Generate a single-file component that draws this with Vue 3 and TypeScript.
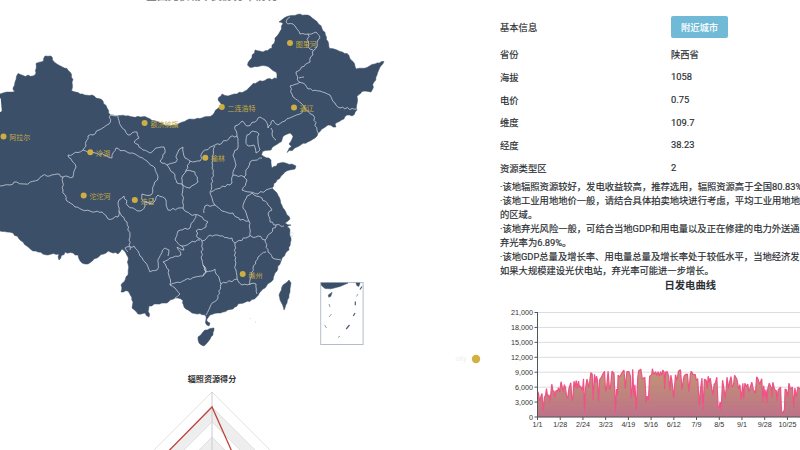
<script setup lang="ts">
type Point = [number, number]

interface City { name: string; x: number; y: number }
interface Row { label: string; value: string }

const parse = (s: string): Point[] =>
  s.trim().split(/\s+/).map((p) => p.split(',').map(Number) as Point)

// Adds small irregular steps to a line so that borders do not look straight.
function trace(s: string, amp = 0.8, close = false): string {
  const pts = parse(s)
  if (close) pts.push(pts[0])
  const out: string[] = [`M${pts[0][0]} ${pts[0][1]}`]
  for (let i = 1; i < pts.length; i++) {
    const [ax, ay] = pts[i - 1]
    const [bx, by] = pts[i]
    const len = Math.hypot(bx - ax, by - ay)
    const n = Math.max(1, Math.round(len / 2.6))
    for (let k = 1; k <= n; k++) {
      const t = k / n
      const seed = Math.sin(i * 12.9898 + k * 78.233 + pts.length) * 43758.5453
      const j = k === n || len === 0 ? 0 : (seed - Math.floor(seed) - 0.5) * 2 * amp
      const x = ax + (bx - ax) * t - ((by - ay) / (len || 1)) * j
      const y = ay + (by - ay) * t + ((bx - ax) / (len || 1)) * j
      out.push(`L${x.toFixed(1)} ${y.toFixed(1)}`)
    }
  }
  return out.join('') + (close ? 'Z' : '')
}

const mainland = trace(`-6,96 0,94 7,92 15,91.5 13,88 15,82 18,73.5 23,75.5 33,76 36,73 36,63.5 43.5,61 45,56 51,56
  52.5,60 59.5,65.5 67,68.5 70,72 73,79.5 71.5,90.5 80,94 92,95 103,101 107,108 110.5,115 118,115.5 133,117 145,116.5
  152,120.5 160,123 170,126 177,125 187,120 200,118.5 210,116.5 218,108.5 222,105 218,100 222,94 228,96 237,94 247,90 253,83.5
  267,79 277,78.5 276,72 268,66.5 260,66 250,67.5 247.5,65 250,60 255,50 263,52 272,48 275,38 281.5,29 283,23.5 279,22
  287,16.5 300,14 310,16 317,21.5 322,28.5 326.5,37 329.5,48.5 340,51.5 347,53.5 353,61.5 356,69 367,67.5 375,64 384,61.5
  377,75 371,92 362,91.5 357,96.5 357,110 352,116 347,115 341.5,120 335,124 336,127 328,125 318,133 315,138 310,141
  297,147 287,152.5 291.5,146.5 289,144 293,136.5 290,133 283,136.5 281.5,141.5 275,145.5 271,150 262.5,151.5 261.5,155
  271,160 272,168 280,163 287,163.5 296,166 295,169 285,172 277,180 272,188 277,193 283,208 290,219 285,223 291,225
  287,227 290,230 291,238 289,250 281.5,260 275,273 271.5,281.5 265,288 256.5,297 250,301.5 238,304 233,309 223,312
  210,315 206.5,320 210,323 209,326 205.5,323 206,316 200,313.5 192,313 184,307 183,300.5 175,298 167,303 157,304
  149,306 149,317 145,313 138,314 132,308 133,302 128,291 121,292 121,285 128,275 128,257 122,249 118,254 108,251
  97,258 88,264 82,263 78,255 65,252 59,260 59,254 48,255 33,251 23,242 13,233 7,232 0,231 -6,231`, 0.9, true)

const islands: string[] = [
  trace('198,337 205,330 214,328 213,335 207,343 204,346 199,343', 0.5, true),
  trace('289,280 291,283 290,292 287,303 284,310 281,302 279,295 283,285', 0.5, true),
]

const borders: string[] = [
  '110.5,115 109,124 99,130 93,135 88,136 86,146 83,150 73,154 68,155 72,161 76,167 73,177 63,177',
  '-2,185 10,185 14,182 25,184 38,180 42,176 57,174 63,177',
  '63,177 63,190 66,200 75,207 90,211 102,212 108,219 118,217 119,211 127,222 130,235 130,250',
  '119,211 119,200 124,196 128,206 140,211 145,206 146,201 150,204 153,198',
  '83,150 90,152 95,153 104,155 112,158 116,148 127,152 135,154 147,161 155,168 158,177 154,185 151,195 142,194 143,201 152,204 158,195',
  '110.5,115 118,115.5 121,126 128,135 137,132 139,138 134,142 143,150 150,153 156,148 164,147 165,153 160,161 167,165 176,162 178,152 183,147 185,158 190,161 186,170 183,175 182,184 177,183 175,175 167,165',
  '158,195 166,200 168,210 183,208 182,184 190,188 198,182 195,172 186,171',
  '190,161 200,161 202,153 205,150 213,146 222,143 230,137 237,136',
  '183,208 190,214 200,216 208,222 206,227 196,231 198,238 202,241',
  '196,215 190,228 178,231 175,240 182,246 190,243 200,240',
  '182,246 184,250 177,247 181,255 170,258 163,262 169,270 170,285 175,288 180,294 175,298',
  '128,252 125,248 134,246 140,256 145,262 150,272 157,270 159,258 165,248 169,250 168,256',
  '170,285 185,280 195,277 203,276 206,272 202,260 202,241',
  '215,146 212,163 213,173 210,192 215,205',
  '237,136 238,147 233,155 236,165 233,175 232,183 211,192',
  '237,136 235,126 242,121 247,126 255,122 260,117 265,120 268,128 273,120 278,125 285,121 292,117 300,114 303,110',
  '271,128 272,134 276,140',
  '247,135 253,131 259,134 258,143 260,150 256,153 254,145 248,146 246,140 247,135',
  '262,158 250,162 248,168 244,177 247,180 242,190 250,192 258,194 266,190 272,188',
  '233,175 244,177',
  '204,213 205,206 215,205 222,211 233,213 240,220 249,221',
  '252,193 247,196 243,208 247,216 249,221 250,236',
  '252,193 262,198 268,205 272,210 268,214 270,222 276,225 284,226',
  '276,225 271,233 265,240',
  '202,241 210,235 220,236 232,238 235,243 248,237 258,236 265,240',
  '235,243 235,260 236,270 237,278',
  '265,240 268,252 275,259 281,260',
  '266,252 258,257 253,268 250,280 250,285',
  '237,278 242,285 250,284 256,284 257,294',
  '203,276 206,272 203,265 206,272 215,269 221,284 237,279',
  '221,284 218,298 210,307 206,315',
  '290,17 286,22 295,26 300,34 308,34 316,32 320,38 314,50 310,62 296,72 299,82 303,83',
  '308,34 308,47 313,50',
  '299,78 304,77',
  '303,83 308,89 320,91 330,95 335,103 340,108 357,109',
  '300,82 290,86 293,97 302,104 308,111 313,115 318,133',
].map((s) => trace(s, 1.1))

const cities: City[] = [
  { name: '图里河', x: 290, y: 43 },
  { name: '二连浩特', x: 221.8, y: 107 },
  { name: '通辽', x: 294, y: 107.4 },
  { name: '额济纳旗', x: 144.6, y: 123 },
  { name: '阿拉尔', x: 3.5, y: 136.5 },
  { name: '冷湖', x: 90.3, y: 152.3 },
  { name: '榆林', x: 205.3, y: 157.7 },
  { name: '沱沱河', x: 83.7, y: 195.6 },
  { name: '达日', x: 134.8, y: 200 },
  { name: '赣州', x: 242.7, y: 274 },
]

const rows: Row[] = [
  { label: '省份', value: '陕西省' },
  { label: '海拔', value: '1058' },
  { label: '电价', value: '0.75' },
  { label: '维度', value: '109.7' },
  { label: '经度', value: '38.23' },
  { label: '资源类型区', value: '2' },
]

const notes: string[] = [
  '·该地辐照资源较好，发电收益较高，推荐选用，辐照资源高于全国80.83%',
  '·该地工业用地地价一般，请结合具体拍卖地块进行考虑，平均工业用地地',
  '的区域。',
  '·该地弃光风险一般，可结合当地GDP和用电量以及正在修建的电力外送通',
  '弃光率为6.89%。',
  '·该地GDP总量及增长率、用电量总量及增长率处于较低水平，当地经济发',
  '如果大规模建设光伏电站，弃光率可能进一步增长。',
]

// Daily chart, drawn in a 300 x 150 box.
const ticksY = [21000, 18000, 15000, 12000, 9000, 6000, 3000, 0]
const ticksX = ['1/1', '1/28', '2/24', '3/23', '4/19', '5/16', '6/12', '7/9', '8/5', '9/1', '9/28', '10/25']
const x0 = 37.5
const y0 = 117
const yOf = (v: number) => y0 - (v / 21000) * 104.5
const fmt = (v: number) => v.toLocaleString('en-US')

const spring = parse(`0.3,5100 1,4700 2,3200 3.5,4200 4.5,4700 5.7,1200 7,4000 8,4300 9,5700 10,4200 11.5,4400 12.5,3100
  14.3,6600 15.5,5100 16.5,5200 17.3,4000 18.5,5300 20,5200 21,5900 22.3,5000 23.5,7100 25,5800 25.8,5100 26.8,6500
  28,5900 29,4200 30.2,3700 31.5,5800 33.3,6900 34.5,3200 35.5,4000 36.5,7200 37.7,6000 38.7,7300 39.7,5700 41,7200
  42,5900 43,6200 45,5300 46,7700 47,1100 48,5800 49.5,7600 51.3,5900 52.2,7100 53.4,8900 54.7,8600 55.5,3400
  57,8600 58,6900 59,8200 60,7300 61,3200 62.2,7500 64,8000 65,8500 67,9200 68,5200 69,5600 70.6,9200 72,5500
  73,5900 74.5,9200 76.5,8800 78,1000 79,5600 80,4400 80.6,8400 82,8000`)
const later = parse(`92,8200 94,8900 96,9400 97.3,5700 99,9100 101,9100 102.5,8200 103,3800 104.3,6000 104.8,9600 106,4100 107,6500
  108.5,1400 110,8000 111,9300 113,9600 114.5,7600 117,8000 118.4,3000 119.2,4200 120.7,3400 122,8200 124,8500
  124.7,9700 126,8500 128,9100 129,8300 130.5,9100 131.5,8200 133,9100 134,8300 135.2,9400 136.5,9000 137,5600
  138,9000 139.6,9100 141,8200 142.5,5300 143.3,8400 144.3,7400 146.2,3800 148,8500 149.5,7300 151,9200 153,9500
  154.7,5500 156.3,7900 157,8300 158,8500 160,8600 161.5,5100 163,8600 164,9200 166,8500 168,8500 169,7300
  170.4,7700 172,2400 173.5,6000 174.8,7800 175.7,1300 177.3,7600 179,7400 180,5700 181,8200 182,6900 183,7800
  184.5,5800 186,4400 187,6600 188.3,6800 189.7,8000 191,2000 192,1700 193,3000 194,1400 195.5,7400 197,5600
  198,3700 199.3,5800 200,8000 201.5,5700 202.6,7000 204,8100 205.3,6000 206.5,6400 207.7,8400 210,7600 211.7,5600
  213,6500 214.3,3500 216,6800 216.8,3800 218,6800 219.5,6100 221,6600 222,5000 223.5,6000 225,7000 226.5,5500
  228.6,4800 230,8100 231.4,7600 233,6500 235,7700 236.3,3100 237,6300 238.3,4000 239.3,5500 240.2,2800 241.2,5700
  242.7,6800 244.7,5800 245.3,4000 246.2,7000 248,5500 249.8,5200 250.3,3300 251.8,5500 254,6000 255,1200 256.5,800
  258,1500 258.6,5600 260,5400 261.5,4000 262.5,6800 264,5600 266,6000 267.4,1900 268.5,5800 270,4000 271.5,6000 274,5600 276,4400 278,6400`)
  .map(([x, v]): Point => [x - 9.5 - (x - 92) * 0.0091, v])
const series = [...spring, ...later]
const lineD = 'M' + series.map(([x, v]) => `${(x0 + x).toFixed(1)} ${yOf(v).toFixed(1)}`).join('L')
const areaD = `${lineD}L${x0 + 267} ${y0}L${x0} ${y0}Z`
</script>

<template>
  <main class="page">
    <section class="left">
      <h2 class="map-title">全国光伏城市资源分布情况</h2>
      <svg class="map" viewBox="0 0 440 365" width="440" height="365">
        <g class="land">
          <path :d="mainland" />
          <path v-for="(d, i) in islands" :key="i" :d="d" />
        </g>
        <g class="borders">
          <path v-for="(d, i) in borders" :key="i" :d="d" />
        </g>
        <path class="gap" d="M-1 96L0.8 99 1.8 111 -1 113Z" />
        <g class="islets">
          <path d="M291.5 232l2 2M290 236l3 0M250 318l1 1M255 322l1 0" />
        </g>
        <g class="inset">
          <rect x="320.7" y="282.5" width="42.4" height="62" />
          <path class="solid" d="M321 283H348L340 286.5 331 288.8 325 288.5 321.5 285.5ZM356 283h4l-1.2 3.5-2-1Z" />
          <path class="solid" d="M328.3 295l3.8-2.7-1.3 4-2 1Z" />
          <path d="M329 304l1 3M331.5 314l-2.5 3M324.7 325l1.8 3M340 336l-2 1.5M358 294l-1.5 2.5" class="faint" />
          <path class="dash" d="M355.3 301.5v3.8M355 313l-1.7 3M349.5 325l-3.3 4M362 286.5l-2 3" />
        </g>
        <g v-for="c in cities" :key="c.name" class="city">
          <circle :cx="c.x" :cy="c.y" r="3" />
          <text :x="c.x + 5.8" :y="c.y + 3.5">{{ c.name }}</text>
        </g>
      </svg>
      <svg class="radar" viewBox="0 0 440 85" width="440" height="85">
        <text class="radar-title" x="212" y="16.5" text-anchor="middle">辐照资源得分</text>
        <path class="ring" d="M212 27L312 127H112Z" />
        <path class="ring shade" d="M212 42L297 127H127Z" />
        <path class="ring" d="M212 57L282 127H142Z" />
        <path class="ring shade" d="M212 72L267 127H157Z" />
        <path class="axis" d="M212 27V85" />
        <path class="score" d="M165.7 89L212 42L233 89" />
      </svg>
    </section>

    <aside class="legend">
      <span class="legend-text">city</span>
      <svg class="legend-dot" viewBox="0 0 10 10" width="10" height="10">
        <circle cx="5" cy="5" r="4.2" />
      </svg>
    </aside>

    <section class="right">
      <div class="row head">
        <span class="label">基本信息</span>
        <button class="near" type="button">附近城市</button>
      </div>
      <div v-for="r in rows" :key="r.label" class="row">
        <span class="label">{{ r.label }}</span>
        <span>{{ r.value }}</span>
      </div>
      <div class="notes">
        <p v-for="(n, i) in notes" :key="i">{{ n }}</p>
      </div>
      <h3 class="chart-title">日发电曲线</h3>
      <svg class="chart" viewBox="0 0 300 150" width="300" height="150">
        <defs>
          <linearGradient id="fill" gradientUnits="userSpaceOnUse" x1="0" y1="68" x2="0" y2="117">
            <stop offset="0" stop-color="#bd9068" />
            <stop offset="1" stop-color="#b96780" />
          </linearGradient>
        </defs>
        <path v-for="v in ticksY" :key="v" class="grid" :d="`M37 ${yOf(v)}H300`" />
        <path :d="areaD" fill="url(#fill)" fill-opacity="0.93" />
        <path class="curve" :d="lineD" />
        <path class="base" :d="`M37.5 12V${y0}H300`" />
        <g v-for="v in ticksY" :key="'y' + v">
          <path class="base" :d="`M34.5 ${yOf(v)}H37.5`" />
          <text class="tick" x="33" :y="yOf(v) + 2.6" text-anchor="end">{{ fmt(v) }}</text>
        </g>
        <g v-for="(t, i) in ticksX" :key="t">
          <path class="base" :d="`M${x0 + i * 22.72} ${y0}v3`" />
          <text class="tick" :x="x0 + i * 22.72" :y="y0 + 10.3" text-anchor="middle">{{ t }}</text>
        </g>
      </svg>
    </section>
  </main>
</template>

<style>
body {
  margin: 0;
  background: #fff;
}
</style>

<style scoped>
.page {
  display: flex;
  width: 800px;
  height: 450px;
  overflow: hidden;
  background: #fff;
  color: #2b2f33;
  font-family: Roboto, "Noto Sans CJK SC", sans-serif;
  font-size: 9.3px;
  -webkit-text-stroke: 0.18px currentColor;
}
.left {
  flex: 0 0 440px;
  height: 450px;
  overflow: hidden;
  display: grid;
  grid-template: 365px 85px / 440px;
}
.map-title {
  grid-area: 1 / 1;
  margin: -11px 0 0;
  padding-left: 146px;
  height: 15px;
  line-height: 15px;
  font-size: 10.9px;
  font-weight: 700;
  color: #888;
  -webkit-text-stroke: 0;
}
.map {
  grid-area: 1 / 1;
}
.radar {
  grid-area: 2 / 1;
}
.land path {
  fill: #3b4f69;
  stroke: #3b4f69;
  stroke-width: 0.5;
}
.borders path {
  fill: none;
  stroke: #c0c8d3;
  stroke-width: 0.85;
  stroke-linejoin: round;
}
.gap {
  fill: #fff;
}
.islets path {
  fill: none;
  stroke: #a9b3c0;
  stroke-width: 0.5;
}
.inset rect {
  fill: none;
  stroke: #b3bdca;
  stroke-width: 1;
}
.inset .solid {
  fill: #3b4f69;
  stroke: #3b4f69;
  stroke-width: 0.5;
}
.inset .dash {
  fill: none;
  stroke: #4c5d76;
  stroke-width: 1.2;
}
.inset .faint {
  fill: none;
  stroke: #8d99aa;
  stroke-width: 0.9;
}
.city circle {
  fill: #ccaf42;
}
.city text {
  fill: #c6aa3f;
  font-size: 7px;
  -webkit-text-stroke: 0.2px #c6aa3f;
}
.radar-title {
  font-size: 8.1px;
  font-weight: 700;
  fill: #333;
  -webkit-text-stroke: 0;
}
.ring {
  fill: #fff;
  stroke: #dedede;
  stroke-width: 0.9;
}
.shade {
  fill: #eee;
}
.axis {
  stroke: #ccc;
  stroke-width: 1;
}
.score {
  fill: none;
  stroke: #c0443c;
  stroke-width: 1.3;
}
.legend {
  flex: 0 0 60px;
  display: flex;
  align-items: center;
  gap: 5px;
  box-sizing: border-box;
  height: 10px;
  margin-top: 354px;
  padding-left: 15.5px;
}
.legend-text {
  width: 10px;
  font-size: 7px;
  line-height: 10px;
  color: #f4f4f4;
}
.legend-dot {
  display: block;
  fill: #d1b140;
}
.right {
  flex: 0 0 300px;
  overflow: hidden;
  padding-top: 11px;
}
.row {
  display: flex;
  align-items: center;
  height: 22.7px;
}
.row span {
  margin-top: -1.4px;
}
.head {
  height: 32.5px;
}
.label {
  flex: 0 0 171px;
}
.near {
  width: 57px;
  height: 22px;
  padding: 0;
  border: 0;
  border-radius: 2px;
  background: #70bad8;
  color: #fff;
  font: inherit;
}
.notes {
  height: 98px;
}
.notes p {
  margin: 0;
  height: 14px;
  line-height: 14px;
  white-space: nowrap;
}
.chart-title {
  margin: 0;
  padding-left: 164.5px;
  height: 23px;
  line-height: 16px;
  font-size: 10.3px;
  font-weight: 700;
  -webkit-text-stroke: 0;
}
.chart {
  display: block;
  margin-top: -0.7px;
}
.grid {
  stroke: #dcdcdc;
  stroke-width: 1;
}
.curve {
  fill: none;
  stroke: #ed5385;
  stroke-width: 1.25;
  stroke-linejoin: bevel;
}
.base {
  fill: none;
  stroke: #555;
  stroke-width: 1;
}
.tick {
  fill: #333;
  font-family: "Liberation Sans", sans-serif;
  font-size: 7.2px;
}
</style>
